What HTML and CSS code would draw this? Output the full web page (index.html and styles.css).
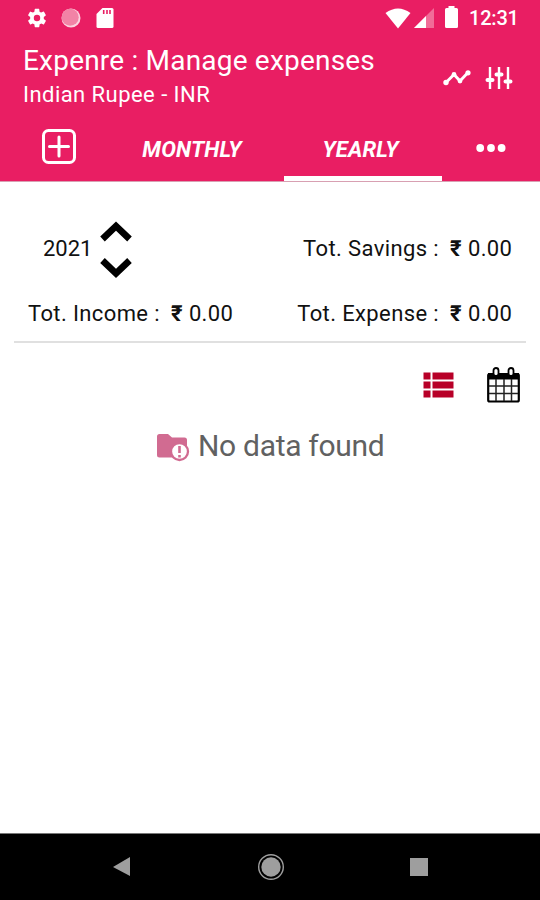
FILE: index.html
```
<!DOCTYPE html>
<html lang="en">
<head>
<meta charset="utf-8">
<title>Expenre : Manage expenses</title>
<link rel="stylesheet" href="styles.css">
</head>
<body>
<div class="phone">
  <header class="header">
    <div class="status">
      <svg class="gear" width="22" height="22" viewBox="0 0 24 24"><path fill="#fff" fill-rule="evenodd" d="M19.4 13a7.500 7.500 0 0 0 0-2l2.100-1.650a.5.5 0 0 0 .12-.64l-2-3.460a.5.5 0 0 0-.6-.22l-2.500 1a7.300 7.300 0 0 0-1.700-.98l-.38-2.650A.5.5 0 0 0 14 2h-4a.5.5 0 0 0-.5.420l-.37 2.650c-.6.250-1.170.590-1.700.980l-2.480-1a.5.5 0 0 0-.6.220l-2 3.460a.5.5 0 0 0 .12.640L4.570 11a8 8 0 0 0 0 2l-2.100 1.650a.5.5 0 0 0-.12.640l2 3.460c.12.220.38.300.6.220l2.500-1c.52.400 1.080.730 1.690.980l.38 2.650c.03.240.24.420.49.420h4c.25 0 .46-.18.490-.42l.38-2.650a7.700 7.700 0 0 0 1.690-.98l2.490 1c.22.080.48 0 .6-.22l2-3.460a.5.500 0 0 0-.12-.64zM12 15.500a3.500 3.500 0 1 1 0-7 3.500 3.500 0 0 1 0 7z"/></svg>
      <svg class="ball" width="20" height="20" viewBox="0 0 20 20"><circle cx="10" cy="10" r="9.500" fill="#fbd3df"/><circle cx="9.200" cy="9.200" r="8.500" fill="#f283a6"/></svg>
      <svg class="card" width="18" height="20" viewBox="0 0 18 20"><path fill="#fff" d="M6.500 0H16q1.500 0 1.500 1.500v17Q17.500 20 16 20H2q-1.500 0-1.500-1.500V6z"/><path stroke="#e91e63" stroke-width="1.600" d="M7.700 2v4M11 2v4M14 2v4"/></svg>
      <span class="spacer"></span>
      <svg class="wifi" width="26" height="21" viewBox="0 0 26 21"><path fill="#fff" d="M13 20.500L.5 5Q13-4 25.500 5z"/></svg>
      <svg class="signal" width="20" height="20" viewBox="0 0 20 20"><path fill="#f16c98" d="M0 20L20 0v20z"/><path fill="#fff" d="M0 20L12 8v12z"/></svg>
      <svg class="battery" width="13" height="22" viewBox="0 0 13 22"><path fill="#fff" d="M3.500 0h6v2H11.500q1.500 0 1.500 1.500v17q0 1.500-1.500 1.500h-10Q0 22 0 20.500v-17Q0 2 1.500 2h2z"/></svg>
      <span class="clock">12:31</span>
    </div>
    <div class="appbar">
      <div class="titles">
        <h1 class="title">Expenre : Manage expenses</h1>
        <p class="subtitle">Indian Rupee - INR</p>
      </div>
      <svg class="trend" width="28" height="16" viewBox="0 0 28 16"><path fill="none" stroke="#fff" stroke-width="2.900" stroke-linejoin="round" d="M3 12.500l8-8 6 6.500 8-8.500"/><g fill="#fff"><circle cx="3" cy="12.500" r="2.700"/><circle cx="11" cy="4.500" r="2.400"/><circle cx="17" cy="11" r="2.400"/><circle cx="25" cy="2.800" r="2.600"/></g></svg>
      <svg class="sliders" width="28" height="24" viewBox="0 0 28 24"><g stroke="#fff" fill="none"><path stroke-width="2.400" d="M5 1v22M14 1v22M23 1v22"/><path stroke-width="4" stroke-linecap="round" d="M2.500 14h5M11.500 8.500h5M20.500 15.500h5"/></g></svg>
    </div>
    <nav class="tabs">
      <div class="tab add"><svg width="34" height="35" viewBox="0 0 34 35"><g fill="none" stroke="#fff" stroke-width="3"><rect x="1.500" y="1.500" width="31" height="32" rx="5"/><path stroke-linecap="round" d="M17 8v19M7.500 17.500h19"/></g></svg></div>
      <div class="tab monthly">MONTHLY</div>
      <div class="tab yearly">YEARLY</div>
      <div class="tab more"><svg width="30" height="8" viewBox="0 0 30 8"><g fill="#fff"><circle cx="4.200" cy="4" r="3.900"/><circle cx="15" cy="4" r="3.900"/><circle cx="25.600" cy="4" r="3.900"/></g></svg></div>
    </nav>
  </header>
  <main class="content">
    <section class="summary">
      <div class="row">
        <div class="year"><span class="num">2021</span>
          <svg width="32" height="60" viewBox="0 0 32 60"><path fill="none" stroke="#000" stroke-width="6.600" d="M2.500 19L16 6l13.500 13M2.500 40.500L16 53.500l13.500-13"/></svg>
        </div>
        <div class="total"><span class="savings">Tot. Savings :</span><span class="rupee">₹</span><span class="amount">0.00</span></div>
      </div>
      <div class="row second">
        <div class="total"><span class="income">Tot. Income :</span><span class="rupee">₹</span><span class="amount">0.00</span></div>
        <div class="total"><span class="expense">Tot. Expense :</span><span class="rupee">₹</span><span class="amount">0.00</span></div>
      </div>
    </section>
    <div class="views">
      <svg width="31" height="26" viewBox="0 0 31 26"><path fill="#b80028" d="M.5.500h7v7h-7zM9.500.500h21v7h-21zM.5 9.500h7v7h-7zM9.500 9.500h21v7h-21zM.5 18.500h7v7h-7zM9.500 18.500h21v7h-21z"/></svg>
      <svg class="calendar" width="33" height="36" viewBox="0 0 33 36"><rect x="1.200" y="7" width="30.600" height="27.500" rx="1.500" fill="#fff" stroke="#000" stroke-width="2.200"/><path d="M1 6h31v6.500H1z"/><path stroke="#222" stroke-width="1.500" d="M9 12v22M17 12v22M24.500 12v22M2 19h29M2 26.500h29"/><rect x="6.500" y="1" width="5" height="8" rx="2.500" fill="#fff" stroke="#000" stroke-width="1.800"/><rect x="21.500" y="1" width="5" height="8" rx="2.500" fill="#fff" stroke="#000" stroke-width="1.800"/></svg>
    </div>
    <div class="empty">
      <svg width="34" height="30" viewBox="0 0 34 30"><path fill="#d16b91" d="M2.500 1h8.500l4 3.500h12.500q2.500 0 2.500 2.500v15q0 2.500-2.500 2.500h-25Q0 24.500 0 22V3.500Q0 1 2.500 1z"/><circle cx="22.500" cy="18.500" r="8.500" fill="#fff" stroke="#d16b91" stroke-width="2.300"/><path fill="#d16b91" d="M21.200 13h2.600v7h-2.600zM21.200 22h2.600v2.600h-2.600z"/></svg>
      <span class="message">No data found</span>
    </div>
  </main>
  <footer class="navbar">
    <svg width="18" height="20" viewBox="0 0 18 20"><path fill="#9e9e9e" d="M0 10L17 0v19z"/></svg>
    <svg width="28" height="28" viewBox="0 0 28 28"><circle cx="14" cy="14" r="12.300" fill="none" stroke="#9e9e9e" stroke-width="1.400"/><circle cx="14" cy="14" r="9.700" fill="#9e9e9e"/></svg>
    <svg width="18" height="18" viewBox="0 0 18 18"><path fill="#9e9e9e" d="M0 0h18v18H0z"/></svg>
  </footer>
</div>
</body>
</html>
```
FILE: styles.css
```
* { box-sizing: border-box; }
body { margin: 0; font-family: Roboto, sans-serif; background: #fff; }
svg { display: block; flex: none; }
.phone { width: 540px; height: 900px; display: flex; flex-direction: column; overflow: hidden; }
.header { height: 182px; background: #e91e63; color: #fff; border-bottom: 1px solid #d8a0b2; }
.status { height: 36px; display: flex; align-items: center; padding: 0 24px 0 26px; }
.ball { margin-left: 13px; }
.card { margin-left: 15px; }
.spacer { flex: 1; }
.signal { margin-left: 3px; }
.battery { margin-left: 11px; margin-top: -2px; }
.clock { margin-left: 11px; width: 47px; font-size: 20px; letter-spacing: -0.2px; font-weight: 500; white-space: nowrap; }
.appbar { height: 81px; display: flex; padding: 0 27px 0 23px; }
.titles { flex: 1; white-space: nowrap; }
.title { margin: 8px 0 0; font-size: 28px; line-height: 34px; font-weight: 400; letter-spacing: 0.2px; }
.subtitle { margin: 4px 0 0; font-size: 22px; line-height: 26px; font-weight: 400; letter-spacing: 0.45px; }
.trend { margin-top: 34px; }
.sliders { margin: 30px 0 0 14px; }
.tabs { height: 64px; display: grid; grid-template-columns: 100px 184px 158px 98px; grid-template-rows: 64px; }
.tab { display: flex; justify-content: center; font-size: 22px; line-height: 64px; font-weight: 700; font-style: italic; }
.add { padding: 12px 0 0 18px; }
.monthly { padding: 1px 0 0 0; letter-spacing: 0.15px; }
.yearly { box-shadow: inset 0 -5px #fff; padding: 1px 5px 0 0; letter-spacing: 0.15px; }
.more { padding-top: 27px; }
.content { height: 651px; }
.summary { margin: 0 14px; height: 161px; border-bottom: 2px solid #e0e0e0; padding: 38px 14px 0; }
.row { display: flex; justify-content: space-between; align-items: center; height: 59px; }
.second { height: 26px; margin-top: 22px; }
.year { display: flex; align-items: center; padding-left: 15px; }
.num { width: 57px; margin-top: -1px; }
.num, .total { font-size: 22px; line-height: 26px; color: #111; white-space: nowrap; }
.row:first-child .total { margin-top: -1px; }
.total { display: flex; letter-spacing: 0.38px; }
.rupee { width: 18px; margin-left: 11px; font-weight: 700; }
.amount { width: 44px; letter-spacing: 0.3px; }
.views { display: flex; align-items: center; justify-content: flex-end; padding: 24px 20px 0 0; height: 60px; }
.calendar { margin-left: 33px; }
.empty { display: flex; align-items: center; padding: 20px 0 0 157px; height: 66px; }
.empty svg { margin-top: 4px; }
.message { margin-left: 7px; font-size: 30px; line-height: 36px; letter-spacing: -0.3px; color: #616161; white-space: nowrap; }
.navbar { height: 67px; background: #000; display: flex; align-items: center; justify-content: space-between; padding: 0 112px 0 113px; border-top: 1px solid #777; }
```
